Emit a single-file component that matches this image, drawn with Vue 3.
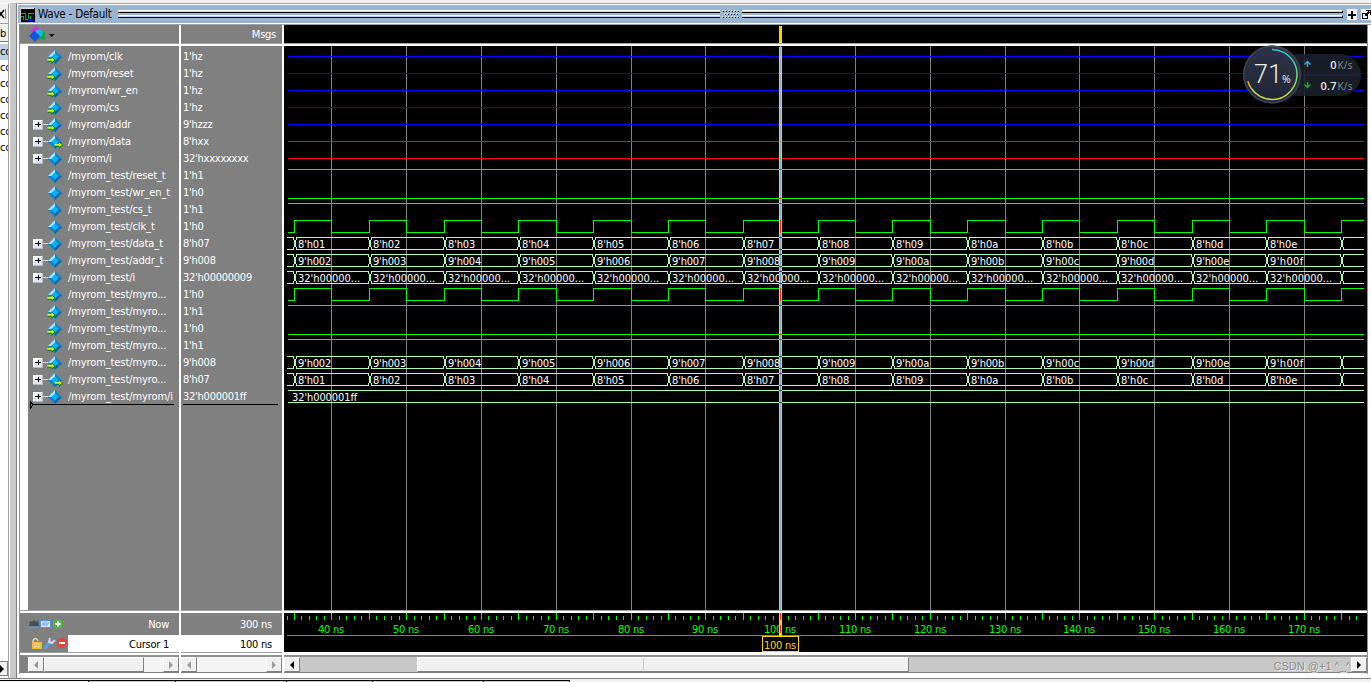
<template>
  <div class="desktop">
    <div class="body-row">
      <aside class="side">
        <div class="side-close">
          <svg width="7" height="10">
            <path d="M-2 1L4 9M4 1L-2 9" stroke="#000" stroke-width="1.500" />
            <path d="M5.500 0V10" stroke="#808080" />
          </svg>
        </div>
        <div class="side-head">b</div>
        <div class="side-list">
          <div v-for="n in 7" :key="n" :class="['side-item', { selected: n === 1 }]">cc</div>
        </div>
        <div class="side-scroll"><i class="tri right dark"></i></div>
      </aside>
      <div class="splitter"></div>

      <main class="window">
        <header class="titlebar">
          <svg class="title-icon" width="15" height="15" shape-rendering="crispEdges">
            <rect width="15" height="15" fill="#000" />
            <path d="M0 .5H15M.5 0V15" stroke="#ccc" />
            <path d="M1 1.500H14" stroke="#ddd" />
            <path d="M1 6.500H5.500V12.500H8.500V6.500H14M1 9.500H3.500V12.500M10.500 9V12" stroke="#12a552" fill="none" />
            <path d="M8 13H14" stroke="#0000f0" stroke-width="2" />
          </svg>
          <span class="title">Wave - Default</span>
          <div class="grip first"><i></i><i></i></div>
          <svg class="dots" width="20" height="9" shape-rendering="crispEdges">
            <g v-for="d in dots" :key="d.x + '-' + d.y">
              <rect :x="d.x" :y="d.y" width="1" height="1" fill="#fff" />
              <rect :x="d.x + 1" :y="d.y + 1" width="1" height="1" fill="#000" />
            </g>
          </svg>
          <div class="grip second"><i></i><i></i></div>
          <svg class="tool" width="10" height="11" shape-rendering="crispEdges">
            <rect width="10" height="11" fill="#f4f4f4" />
            <path d="M1 5.500H9M5 1.500V9.500" stroke="#000" stroke-width="2" />
          </svg>
          <svg class="tool last" width="10" height="11" shape-rendering="crispEdges">
            <rect width="10" height="11" fill="#f4f4f4" />
            <path d="M1.500 4.500H6.500V9.500H1.500Z" stroke="#000" fill="none" />
            <path d="M4 7L8 3M5 1.500H9.500V6" stroke="#000" fill="none" stroke-width="1.500" />
          </svg>
        </header>

        <div class="panes">
          <section class="pane names">
            <div class="pane-head">
              <svg width="28" height="18">
                <path d="M1 5L7 0L13 5L8 9Z" fill="#c238cc" />
                <rect x="8" y="5.500" width="8" height="8" fill="#18a348" />
                <circle cx="10" cy="7" r="3.600" fill="#18baf0" />
                <path d="M0 10L5 5L11 10L6 16Z" fill="#1553df" />
                <path d="M20 8H25.500L22.700 11Z" fill="#000" />
              </svg>
            </div>
            <div class="pane-body">
              <div class="gutter"></div>
              <div class="list">
                <div v-for="(s, i) in signals" :key="i" class="row">
                  <span class="toggle">
                    <svg v-if="s.bus" width="15" height="11" shape-rendering="crispEdges">
                      <rect x="0" y="0" width="10" height="10" fill="#b4b9c8" />
                      <rect x="0" y="0" width="9" height="9" fill="#fff" />
                      <path d="M5 1H9V9H1V6Z" fill="#e2e5ee" />
                      <path d="M2 4.500H8M5 2V7" stroke="#000" />
                      <path d="M10 4.500H15" stroke="#d8d8d8" />
                    </svg>
                  </span>
                  <svg class="gem" width="17" height="16">
                    <path d="M8 1L15 8L8 15L1 8Z" fill="#129be0" />
                    <path d="M8 1V4.500L4.500 8H1Z" fill="#a5e4fb" />
                    <path d="M8 1L15 8H11.500L8 4.500Z" fill="#1683c4" />
                    <path d="M15 8L8 15V11.500L11.500 8Z" fill="#07639c" />
                    <path d="M1 8H4.500L8 11.500V15Z" fill="#0d82c4" />
                    <path d="M8 4.500L11.500 8L8 11.500L4.500 8Z" fill="#04b4fc" />
                    <g v-if="s.dir" :transform="s.dir === 'out' ? 'translate(7.500 0)' : ''">
                      <path d="M.5 9.500H4.500V7.500L8.500 11L4.500 15V12.800H.5Z" fill="#0c7a12" />
                      <path d="M.3 9.800H4.700V8.500L7.600 11L4.700 13V11.800H.3Z" fill="#c6f32c" />
                    </g>
                  </svg>
                  <span class="label">{{ s.name }}</span>
                </div>
                <svg class="insert" width="146" height="8" shape-rendering="crispEdges">
                  <path d="M.5 .5V7L3 4Z" fill="none" stroke="#000" />
                  <path d="M3 3.500H144" stroke="#000" />
                </svg>
              </div>
            </div>
            <div class="times">
              <div class="time now">
                <svg width="40" height="22">
                  <path d="M1 13L2 8L4 9L6 7L8 9L10 7L11 13Z" fill="#454d58" />
                  <path d="M1 14.500H11" stroke="#4a9bea" stroke-width="1.500" />
                  <rect x="12.500" y="6.500" width="10" height="8" fill="#dcecff" stroke="#5c8fd0" />
                  <path d="M12 7H23" stroke="#4b8ae0" stroke-width="2" />
                  <path d="M14 10H21M14 12H20" stroke="#5f94cf" />
                  <circle cx="30" cy="11" r="5" fill="#4eb848" />
                  <path d="M27.500 11H32.500M30 8.500V13.500" stroke="#fff" stroke-width="2" />
                </svg>
                <span>Now</span>
              </div>
              <div class="time cursor">
                <div class="cursor-tools">
                  <svg width="40" height="17">
                    <path d="M5 8V5.500Q8 1.500 10 6" fill="none" stroke="#e8d49a" stroke-width="1.500" />
                    <rect x="4" y="7" width="10" height="7" fill="#f5b93a" />
                    <path d="M6 9H12M6 11.500H12" stroke="#fbe29b" />
                    <path d="M17 13L22 7" stroke="#5f9cf0" stroke-width="3" stroke-linecap="round" />
                    <path d="M22 3L21 7L24 8L27 5" fill="none" stroke="#c9dcf2" stroke-width="2" />
                    <circle cx="34" cy="8" r="5.200" fill="#e2443d" />
                    <path d="M31 8H37" stroke="#fff" stroke-width="2" />
                  </svg>
                </div>
                <span>Cursor 1</span>
              </div>
            </div>
            <div class="scroll">
              <b class="btn"><i class="tri left"></i></b>
              <div class="thumb name-thumb"></div>
              <div class="track"></div>
              <b class="btn"><i class="tri right"></i></b>
            </div>
          </section>

          <section class="pane values">
            <div class="pane-head">Msgs</div>
            <div class="pane-body">
              <div class="list">
                <div v-for="(s, i) in signals" :key="i" class="row">{{ s.value }}</div>
                <div class="value-end"></div>
              </div>
            </div>
            <div class="times">
              <div class="time now"><span>300 ns</span></div>
              <div class="time cursor"><span>100 ns</span></div>
            </div>
            <div class="scroll">
              <b class="btn"><i class="tri left"></i></b>
              <div class="track"></div>
              <b class="btn"><i class="tri right"></i></b>
            </div>
          </section>

          <section class="pane waves">
            <div class="pane-head">
              <svg width="1083" height="18" viewBox="284 25 1083 18" shape-rendering="crispEdges">
                <rect x="779" y="26" width="3" height="17" fill="#ffd700" />
              </svg>
            </div>
            <div class="pane-body">
              <svg class="plot" width="1083" height="564" viewBox="284 46 1083 564" shape-rendering="crispEdges">
                <rect x="284" y="46" width="1083" height="564" fill="#000" />
                <path v-for="t in majors" :key="t" :d="`M${px(t) + 0.5} 46V610`" stroke="#808080" />
                <path v-for="(w, i) in traces" :key="i" :d="w.d" :stroke="w.color" fill="none" />
                <text v-for="(t, i) in busTexts" :key="i" :x="t.x" :y="t.y" :textLength="t.len" class="bus-text">{{ t.text }}</text>
                <rect x="779" y="47" width="3" height="563" fill="#ffd700" />
                <rect x="780" y="46" width="1" height="564" fill="#80a4b4" />
                <rect
                  v-for="(c, i) in crossings"
                  :key="i"
                  :x="c.wide ? 779 : 780"
                  :y="c.y"
                  :width="c.wide ? 3 : 1"
                  :height="c.h"
                  :fill="c.color"
                />
              </svg>
            </div>
            <div class="times">
              <svg class="ruler" width="1083" height="39" viewBox="284 613 1083 39" shape-rendering="crispEdges">
                <rect x="284" y="613" width="1083" height="39" fill="#000" />
                <path :d="ticks" stroke="#00ff00" />
                <path d="M287 635.500H1364" stroke="#808080" />
                <text v-for="t in majors" :key="t" :x="px(t)" y="633" :textLength="t < 100 ? 26 : 32" class="tick-text">{{ t }} ns</text>
                <path d="M780.500 613V636" stroke="#ffd700" stroke-width="3" />
                <path d="M780.500 613V620M780.500 625V633" stroke="#ff2800" />
                <rect x="762.500" y="636.500" width="36" height="15" fill="#000" stroke="#ffd700" />
                <text x="780" y="649" textLength="32" class="tick-text gold">100 ns</text>
              </svg>
            </div>
            <div class="scroll">
              <b class="btn"><i class="tri left dark"></i></b>
              <div class="lane"></div>
              <div class="thumb wave-thumb"><i></i></div>
              <div class="lane grow"><span class="mark">CSDN @+1 ^_^</span></div>
              <b class="btn"><i class="tri right dark"></i></b>
            </div>
          </section>
        </div>
      </main>
    </div>

    <footer class="tabs">
      <span v-for="(w, i) in tabs" :key="i" :class="{ active: i === 0 }" :style="{ width: w + 'px' }"></span>
    </footer>

    <div class="meter">
      <svg width="120" height="62" viewBox="1242 44 120 62">
        <defs>
          <linearGradient id="ring" x1="0" y1="0" x2="0" y2="1">
            <stop offset="0" stop-color="#30c4cf" />
            <stop offset=".55" stop-color="#7bd779" />
            <stop offset="1" stop-color="#d7d545" />
          </linearGradient>
          <linearGradient id="orb" x1="0" y1="0" x2="0" y2="1">
            <stop offset="0" stop-color="#30374a" />
            <stop offset="1" stop-color="#222838" />
          </linearGradient>
        </defs>
        <rect x="1276" y="54" width="85" height="42" rx="21" fill="#1b202a" fill-opacity=".9" />
        <path d="M1301 75H1359" stroke="#252b38" />
        <circle cx="1272" cy="74.500" r="29" fill="url(#orb)" fill-opacity=".93" />
        <circle cx="1272" cy="74.500" r="28.200" fill="none" stroke="#3d4453" stroke-width="1.500" />
        <path d="M1272 49.500A25 25 0 1 1 1251 88" fill="none" stroke="url(#ring)" stroke-width="1.500" />
        <path d="M1251 88A25 25 0 0 1 1247.800 81" fill="none" stroke="#e5ae33" stroke-width="1.500" />
        <path d="M1307.500 67V62M1304.500 64.500L1307.500 61.500L1310.500 64.500" fill="none" stroke="#35a7e4" stroke-width="1.500" />
        <path d="M1307.500 82V87M1304.500 84.500L1307.500 87.500L1310.500 84.500" fill="none" stroke="#1fa52e" stroke-width="1.500" />
        <text x="1254" y="83" textLength="28" class="percent">71</text>
        <text x="1282" y="83" class="sign">%</text>
        <text x="1336.500" y="69" text-anchor="end" class="rate">0</text>
        <text x="1337.500" y="69" textLength="15" class="unit">K/s</text>
        <text x="1336.500" y="90" text-anchor="end" textLength="16" class="rate">0.7</text>
        <text x="1337.500" y="90" textLength="15" class="unit">K/s</text>
      </svg>
    </div>
  </div>
</template>

<script setup>
// kind: z = high impedance, x = unknown, hi / lo = constant level
const signals = [
  { name: '/myrom/clk', value: "1'hz", dir: 'in', kind: 'z' },
  { name: '/myrom/reset', value: "1'hz", dir: 'in', kind: 'z' },
  { name: '/myrom/wr_en', value: "1'hz", dir: 'in', kind: 'z' },
  { name: '/myrom/cs', value: "1'hz", dir: 'in', kind: 'z' },
  { name: '/myrom/addr', value: "9'hzzz", dir: 'in', bus: true, kind: 'z' },
  { name: '/myrom/data', value: "8'hxx", dir: 'out', bus: true, kind: 'x' },
  { name: '/myrom/i', value: "32'hxxxxxxxx", bus: true, kind: 'x' },
  { name: '/myrom_test/reset_t', value: "1'h1", kind: 'hi' },
  { name: '/myrom_test/wr_en_t', value: "1'h0", kind: 'lo' },
  { name: '/myrom_test/cs_t', value: "1'h1", kind: 'hi' },
  { name: '/myrom_test/clk_t', value: "1'h0", kind: 'clk' },
  { name: '/myrom_test/data_t', value: "8'h07", bus: true, kind: 'data' },
  { name: '/myrom_test/addr_t', value: "9'h008", bus: true, kind: 'addr' },
  { name: '/myrom_test/i', value: "32'h00000009", bus: true, kind: 'int' },
  { name: '/myrom_test/myro...', value: "1'h0", dir: 'in', kind: 'clk' },
  { name: '/myrom_test/myro...', value: "1'h1", dir: 'in', kind: 'hi' },
  { name: '/myrom_test/myro...', value: "1'h0", dir: 'in', kind: 'lo' },
  { name: '/myrom_test/myro...', value: "1'h1", dir: 'in', kind: 'hi' },
  { name: '/myrom_test/myro...', value: "9'h008", dir: 'in', bus: true, kind: 'addr' },
  { name: '/myrom_test/myro...', value: "8'h07", dir: 'out', bus: true, kind: 'data' },
  { name: '/myrom_test/myrom/i', value: "32'h000001ff", bus: true, kind: 'const' }
]

const LEFT = 288
const RIGHT = 1364
const px = (ns) => Math.floor(331.9 + (ns - 40) * 7.48)

const majors = Array.from({ length: 14 }, (_, k) => 40 + k * 10)
const edges = Array.from({ length: 15 }, (_, k) => 35 + k * 10)

const clockPath = (c) => {
  let d = `M${LEFT} ${c + 6}.5`
  edges.forEach((t) => {
    d += `H${px(t)}.5V${c - 6}.5`
    if (t < 175) d += `H${px(t + 5)}.5V${c + 6}.5`
  })
  return d + `H${RIGHT}`
}

const busPath = (c) => {
  let d = ''
  let x = LEFT - 1
  edges.forEach((t) => {
    const e = px(t)
    d += `M${x} ${c - 5.5}H${e}M${x} ${c + 6.5}H${e}`
    d += `M${e - 0.5} ${c - 5}V${c - 3}M${e + 0.5} ${c - 3}V${c + 4}M${e - 0.5} ${c + 4}V${c + 6}`
    d += `M${e + 2.5} ${c - 5}V${c - 3}M${e + 1.5} ${c - 3}V${c + 4}M${e + 2.5} ${c + 4}V${c + 6}`
    x = e + 2
  })
  return d + `M${x} ${c - 5.5}H${RIGHT}M${x} ${c + 6.5}H${RIGHT}`
}

const level = (y) => `M${LEFT} ${y}.5H${RIGHT}`

const traces = signals.map((s, i) => {
  const c = 56 + i * 17
  switch (s.kind) {
    case 'z': return { d: level(c), color: '#0000ff' }
    case 'x': return { d: level(c), color: '#ff0000' }
    case 'hi': return { d: level(c - 6), color: '#00ff00' }
    case 'lo': return { d: level(c + 6), color: '#00ff00' }
    case 'clk': return { d: clockPath(c), color: '#00ff00' }
    case 'const': return { d: level(c - 6) + level(c + 6), color: '#b0ffb0' }
    default: return { d: busPath(c), color: '#b0ffb0' }
  }
})

// the cursor inverts whatever trace it passes over
const crossings = signals.flatMap((s, i) => {
  const c = 56 + i * 17
  switch (s.kind) {
    case 'z': return [{ y: c, h: 1, color: '#ffd7ff' }]
    case 'x': return [{ y: c, h: 1, color: '#00d700' }]
    case 'hi': return [{ y: c - 6, h: 1, color: '#ff2800', wide: true }]
    case 'lo': return [{ y: c + 6, h: 1, color: '#ff2800', wide: true }]
    case 'clk': return [{ y: c - 6, h: 13, color: '#ff2800' }]
    default: return [
      { y: c - 6, h: 1, color: '#4f28b0', wide: true },
      { y: c + 6, h: 1, color: '#4f28b0', wide: true }
    ]
  }
})

const hex = (n, width) => n.toString(16).padStart(width, '0')

const busTexts = []
signals.forEach((s, i) => {
  const y = 60 + i * 17 + 0.5
  if (s.kind === 'const') busTexts.push({ x: 292, y, text: s.value, len: 65 })
  if (!['data', 'addr', 'int'].includes(s.kind)) return
  edges.slice(0, 14).forEach((t, k) => {
    const x = px(t) + 4
    if (s.kind === 'data') busTexts.push({ x, y, text: `8'h${hex(k + 1, 2)}`, len: 27 })
    if (s.kind === 'addr') busTexts.push({ x, y, text: `9'h${hex(k + 2, 3)}`, len: 33 })
    if (s.kind === 'int') busTexts.push({ x, y, text: "32'h00000...", len: 62 })
  })
})

let ticks = ''
for (let t = 34; t <= 177; t++) {
  ticks += `M${px(t)}.5 ${t % 5 ? 616 : 613}V620`
}

const dots = []
for (let r = 0; r < 3; r++) {
  for (let k = 0; k < (r === 1 ? 5 : 6); k++) {
    dots.push({ x: k * 3 + (r === 1 ? 2 : 0), y: r * 3 })
  }
}

const tabs = [89, 87, 111, 86, 111, 86]
</script>

<style>
body {
  overflow: hidden;
  background: #f0f0f0;
}
</style>

<style scoped>
.desktop {
  width: 1371px;
  height: 682px;
  display: flex;
  flex-direction: column;
  overflow: hidden;
  position: relative;
  background: #f0f0f0;
  font-family: 'DejaVu Sans Condensed', 'DejaVu Sans', sans-serif;
  font-size: 11px;
  letter-spacing: -0.25px;
  color: #000;
}

.desktop * {
  box-sizing: border-box;
}

.desktop svg {
  display: block;
  flex: none;
}

.body-row {
  display: flex;
  height: 678px;
  padding-top: 3px;
}

.side {
  width: 9px;
  border-top: 1px solid #fff;
  border-right: 1px solid #a0a0a0;
  background: #fff;
  overflow: hidden;
  display: flex;
  flex-direction: column;
}

.side-close {
  height: 20px;
  padding-top: 5px;
  background: #f0f0f0;
  border-bottom: 1px solid #a0a0a0;
}

.side-head {
  height: 17px;
  margin-top: 1px;
  background: #f0f0f0;
  border-bottom: 1px solid #777;
  line-height: 17px;
}

.side-list {
  flex: 1;
  padding-top: 2px;
}

.side-item {
  height: 16px;
  line-height: 16px;
}

.side-item.selected {
  background: #bfd0e2;
}

.side-scroll {
  height: 15px;
  margin-bottom: 2px;
  background: #f0f0f0;
  border: 1px solid #808080;
  border-left: none;
  padding: 3px 0 0;
}

.splitter {
  width: 8px;
  border-left: 1px solid #fff;
  border-right: 1px solid #808080;
  background: #c8c8c8;
}

.window {
  flex: 1;
  min-width: 0;
  display: flex;
  flex-direction: column;
  border-top: 1px solid #a0a0a0;
  border-left: 1px solid #fff;
  background: #fff;
  padding-top: 1px;
}

.titlebar {
  height: 18px;
  display: flex;
  align-items: center;
  background: #99b4d1;
  padding-left: 2px;
  overflow: hidden;
}

.title {
  width: 83px;
  padding-left: 3px;
  font-size: 11.500px;
  letter-spacing: -0.2px;
  line-height: 18px;
  white-space: nowrap;
}

.grip i {
  display: block;
  height: 3px;
  border-top: 1px solid #fff;
  border-bottom: 1px solid #000;
  background: #b8d4f4;
  margin-bottom: 2px;
}

.grip.first {
  width: 602px;
  padding-top: 2px;
}

.grip.second {
  width: 601px;
  padding-top: 2px;
}

.grip.second i {
  border-right: 1px solid #000;
}

.dots {
  margin-left: 2px;
}

.tool {
  margin-left: 4px;
}

.panes {
  height: 650px;
  display: flex;
  margin-top: 1px;
  border-top: 1px solid #a0a0a0;
  border-left: 1px solid #fff;
}

.pane {
  display: flex;
  flex-direction: column;
  flex: none;
}

.names {
  width: 162px;
  border-left: 1px solid #909090;
  border-right: 2px solid #fff;
}

.values {
  width: 103px;
  border-right: 2px solid #fff;
}

.waves {
  width: 1084px;
  border-right: 1px solid #909090;
}

.pane-head {
  height: 21px;
  background: #808080;
  border-bottom: 2px solid #fff;
  box-shadow: inset 0 -1px #a0a0a0;
  color: #fff;
}

.names .pane-head svg {
  margin: 1px 0 0 9px;
}

.values .pane-head {
  text-align: right;
  padding-right: 6px;
  line-height: 19px;
}

.waves .pane-head {
  background: #000;
}

.pane-body {
  height: 564px;
  display: flex;
  background: #808080;
  color: #fff;
}

.gutter {
  width: 8px;
  background: #fff;
}

.list {
  flex: 1;
  padding-top: 2px;
}

.names .list {
  padding-left: 5px;
}

.row {
  height: 17px;
  display: flex;
  align-items: center;
  line-height: 17px;
  white-space: nowrap;
}

.toggle {
  width: 14px;
  padding-top: 2px;
}

.gem {
  margin-right: 4px;
}

.label {
  margin-top: -1px;
  letter-spacing: -0.1px;
}

.values .row {
  padding: 0 0 1px 2px;
}

.insert {
  margin: -4px 0 0 -3px;
}

.value-end {
  width: 95px;
  height: 1px;
  margin: -1px 0 0 2px;
  background: #000;
}

.bus-text {
  fill: #fff;
}

.times {
  height: 45px;
  border-top: 1px solid #a0a0a0;
  border-bottom: 1px solid #fff;
  padding-top: 2px;
  background: #fff;
}

.time {
  display: flex;
  justify-content: space-between;
  white-space: nowrap;
}

.time span {
  margin-left: auto;
  padding-right: 10px;
}

.now {
  height: 22px;
  line-height: 23px;
  background: #808080;
  color: #fff;
}

.now svg {
  margin-left: 8px;
}

.cursor {
  height: 18px;
  line-height: 19px;
  border-bottom: 1px solid #a0a0a0;
}

.cursor-tools {
  width: 48px;
  padding-left: 8px;
  background: #808080;
}

.tick-text {
  fill: #00ff00;
  text-anchor: middle;
}

.tick-text.gold {
  fill: #ffd700;
}

.scroll {
  height: 18px;
  display: flex;
  border-top: 2px solid #909090;
  border-bottom: 1px solid #808080;
  background: #c8c8c8;
}

.names .scroll {
  border-left: 8px solid #808080;
}

.btn {
  width: 16px;
  flex: none;
  display: flex;
  align-items: center;
  justify-content: center;
  background: #f0f0f0;
  border: 1px solid #fff;
  border-right-color: #808080;
  border-bottom-color: #808080;
}

.tri {
  display: block;
  width: 0;
  height: 0;
  border-top: 4px solid transparent;
  border-bottom: 4px solid transparent;
}

.tri.left {
  border-right: 4px solid #999;
}

.tri.right {
  border-left: 4px solid #999;
}

.tri.left.dark {
  border-right-color: #000;
}

.tri.right.dark {
  border-left-color: #000;
}

.thumb {
  flex: none;
  background: #f0f0f0;
  border: 1px solid #fff;
  border-right: 1px solid #808080;
  border-bottom: 1px solid #808080;
}

.name-thumb {
  width: 100px;
}

.track {
  flex: 1;
  background: #f4f4f4;
}

.lane {
  width: 117px;
}

.lane.grow {
  flex: 1;
  display: flex;
  justify-content: flex-end;
}

.wave-thumb {
  width: 492px;
}

.wave-thumb i {
  display: block;
  width: 1px;
  height: 12px;
  margin: 0 0 0 225px;
  background: #ffd700;
}

.mark {
  font-family: 'Liberation Sans', Arial, sans-serif;
  font-size: 11px;
  letter-spacing: 0;
  line-height: 18px;
  color: #8c8c8c;
  text-shadow: 1px 1px #e8e8e8;
  white-space: nowrap;
}

.tabs {
  height: 4px;
  display: flex;
  border-top: 1px solid #808080;
  background: #f0f0f0;
}

.tabs span {
  height: 3px;
  margin-top: 1px;
  border-top: 1px solid #000;
  border-right: 1px solid #000;
  background: #c8c8c8;
}

.tabs .active {
  background: #f0f0f0;
}

.meter {
  position: absolute;
  left: 1242px;
  top: 44px;
  font-family: 'Open Sans', 'Noto Sans', sans-serif;
  letter-spacing: 0;
}

.percent {
  font-family: Roboto, 'Open Sans', sans-serif;
  font-size: 25px;
  font-weight: 300;
  fill: #eee;
}

.sign {
  font-size: 10.500px;
  fill: #eee;
}

.rate {
  font-size: 11px;
  font-weight: 600;
  fill: #e8e8e8;
}

.unit {
  font-size: 10px;
  fill: #8a8d94;
}
</style>
